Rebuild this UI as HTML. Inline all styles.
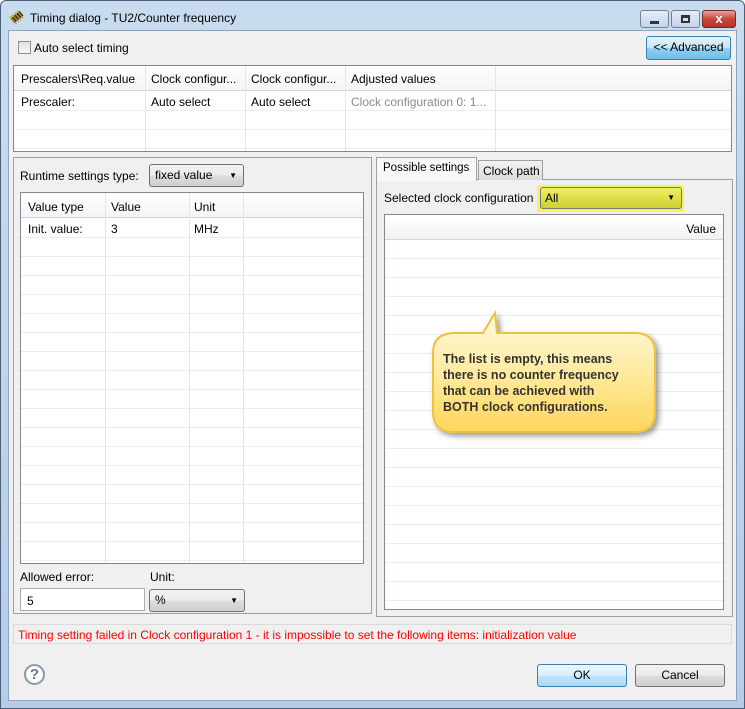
<!DOCTYPE html><html><head><style>
*{box-sizing:border-box}
body{margin:0;width:745px;height:709px;position:relative;overflow:hidden;font-family:"Liberation Sans",sans-serif;font-size:12px;color:#000;background:#fff}
.a{position:absolute}
.frame{left:0;top:0;width:745px;height:709px;background:linear-gradient(#c9dcef,#b7cde6);border:1px solid #4b5f78;border-radius:6px 6px 0 0}
.client{left:8px;top:30px;width:729px;height:671px;background:#f0f0f0;border:1px solid #8ea3bd}
.btn{border:1px solid #707070;border-radius:3px;background:linear-gradient(#f2f2f2 0,#ebebeb 50%,#dddddd 51%,#cfcfcf);text-align:center;line-height:21px}
.tbl{background:#fff;border:1px solid #828790}
.hl{height:1px;background:#ededed}
.vl{width:1px;background:#e5e5e5}
.t{white-space:nowrap}
</style></head><body>
<div class="a frame"></div>
<svg class="a" style="left:8px;top:8px" width="18" height="18" viewBox="0 0 18 18"><g transform="rotate(-40 9 9)"><rect x="3" y="6" width="12" height="6" fill="#333"/><g stroke="#c8a000" stroke-width="1.2"><line x1="4" y1="4" x2="4" y2="14"/><line x1="7" y1="4" x2="7" y2="14"/><line x1="10" y1="4" x2="10" y2="14"/><line x1="13" y1="4" x2="13" y2="14"/></g></g></svg>
<div class="a t" style="left:30px;top:11px;font-size:12px">Timing dialog - TU2/Counter frequency</div>
<div class="a" style="left:640px;top:10px;width:29px;height:18px;border:1px solid #6f829b;border-radius:3px;background:linear-gradient(#e6eef8,#c3d3e6)"><div class="a" style="left:9px;top:10px;width:9px;height:3px;background:#333"></div></div>
<div class="a" style="left:671px;top:10px;width:29px;height:18px;border:1px solid #6f829b;border-radius:3px;background:linear-gradient(#e6eef8,#c3d3e6)"><div class="a" style="left:9px;top:4px;width:9px;height:8px;border:2px solid #333;border-top-width:3px"></div></div>
<div class="a" style="left:702px;top:10px;width:34px;height:18px;border:1px solid #7a2a20;border-radius:3px;background:linear-gradient(#e8a595,#c8463a 50%,#b63326);color:#fff;font-weight:bold;text-align:center;line-height:16px;font-size:13px">x</div>
<div class="a client"></div>
<div class="a" style="left:18px;top:41px;width:13px;height:13px;border:1px solid #8f8f8f;background:linear-gradient(#e0e0e0,#f8f8f8)"></div>
<div class="a t" style="left:34px;top:41px">Auto select timing</div>
<div class="a btn" style="left:646px;top:36px;width:85px;height:24px;border-color:#3c7fb1;background:linear-gradient(#e5f4fc,#c4e5f6 50%,#98d1ef 51%,#6cbce8)">&lt;&lt; Advanced</div>
<div class="a tbl" style="left:13px;top:65px;width:719px;height:87px">
<div class="a" style="left:0;top:0;width:717px;height:24px;background:linear-gradient(#fff,#f3f4f6)"></div>
<div class="a" style="left:0;top:24px;width:717px;height:1px;background:#d5d5d5"></div>
<div class="a hl" style="left:0;top:44px;width:717px"></div>
<div class="a hl" style="left:0;top:63px;width:717px"></div>
<div class="a hl" style="left:0;top:82px;width:717px"></div>
<div class="a vl" style="left:131px;top:0;height:85px"></div><div class="a vl" style="left:231px;top:0;height:85px"></div><div class="a vl" style="left:331px;top:0;height:85px"></div><div class="a vl" style="left:481px;top:0;height:85px"></div>
<div class="a t" style="left:7px;top:6px">Prescalers\Req.value</div><div class="a t" style="left:137px;top:6px">Clock configur...</div><div class="a t" style="left:237px;top:6px">Clock configur...</div><div class="a t" style="left:337px;top:6px">Adjusted values</div>
<div class="a t" style="left:7px;top:29px">Prescaler:</div><div class="a t" style="left:137px;top:29px">Auto select</div><div class="a t" style="left:237px;top:29px">Auto select</div><div class="a t" style="left:337px;top:29px;color:#8a8a8a">Clock configuration 0: 1...</div>
</div>
<div class="a" style="left:13px;top:157px;width:359px;height:457px;border:1px solid #a0a0a0;background:#f0f0f0"></div>
<div class="a t" style="left:20px;top:169px">Runtime settings type:</div>
<div class="a btn" style="left:149px;top:164px;width:95px;height:23px;text-align:left;padding-left:5px">fixed value<span class="a" style="right:6px;top:0;font-size:8px">▼</span></div>
<div class="a tbl" style="left:20px;top:192px;width:344px;height:372px;overflow:hidden">
<div class="a" style="left:0;top:0;width:342px;height:24px;background:linear-gradient(#fff,#f3f4f6)"></div>
<div class="a" style="left:0;top:24px;width:342px;height:1px;background:#d5d5d5"></div>
<div id="lr"></div>
<div class="a vl" style="left:84px;top:0;height:370px"></div><div class="a vl" style="left:168px;top:0;height:370px"></div><div class="a vl" style="left:222px;top:0;height:370px"></div>
<div class="a t" style="left:7px;top:7px">Value type</div><div class="a t" style="left:90px;top:7px">Value</div><div class="a t" style="left:173px;top:7px">Unit</div>
<div class="a t" style="left:7px;top:29px">Init. value:</div><div class="a t" style="left:90px;top:29px">3</div><div class="a t" style="left:173px;top:29px">MHz</div>
</div>
<div class="a t" style="left:20px;top:570px">Allowed error:</div>
<div class="a t" style="left:150px;top:570px">Unit:</div>
<div class="a" style="left:20px;top:588px;width:125px;height:23px;border:1px solid #abadb3;background:#fff;padding:5px 6px">5</div>
<div class="a btn" style="left:149px;top:589px;width:96px;height:23px;text-align:left;padding-left:5px">%<span class="a" style="right:6px;top:0;font-size:8px">▼</span></div>
<div class="a" style="left:376px;top:179px;width:357px;height:438px;border:1px solid #a0a0a0;background:#f0f0f0"></div>
<div class="a t" style="left:376px;top:157px;width:101px;height:24px;border:1px solid #a0a0a0;border-bottom:none;background:#f7f7f7;padding:4px 0 0 6px;font-size:11.5px">Possible settings</div>
<div class="a t" style="left:478px;top:160px;width:65px;height:20px;border:1px solid #a0a0a0;border-bottom:none;background:linear-gradient(#f2f2f2,#dcdcdc);padding:3px 0 0 4px">Clock path</div>
<div class="a t" style="left:384px;top:191px">Selected clock configuration</div>
<div class="a" style="left:537px;top:185px;width:147px;height:27px;background:#f3f35a;border-radius:2px"></div>
<div class="a" style="left:540px;top:187px;width:142px;height:22px;border:1px solid #777;border-radius:3px;background:linear-gradient(#efef62,#cfcf35);padding:3px 4px">All<span class="a" style="right:6px;top:5px;font-size:8px">▼</span></div>
<div class="a tbl" style="left:384px;top:214px;width:340px;height:396px;overflow:hidden">
<div class="a" style="left:0;top:2px;width:338px;height:22px;background:linear-gradient(#fff,#f1f2f4)"></div>
<div class="a" style="left:0;top:24px;width:338px;height:1px;background:#d5d5d5"></div>
<div id="rr"></div>
<div class="a t" style="right:7px;top:7px">Value</div>
</div>
<svg class="a" style="left:425px;top:305px" width="245" height="140"><defs><linearGradient id="g" x1="0" y1="0" x2="0" y2="1"><stop offset="0" stop-color="#fffbe0"/><stop offset="0.5" stop-color="#ffeaa0"/><stop offset="1" stop-color="#ffd65a"/></linearGradient><filter id="s"><feDropShadow dx="3" dy="3" stdDeviation="3" flood-opacity="0.4"/></filter></defs>
<path d="M30 28 L58 28 L70 8 L72 28 L210 28 Q230 28 230 48 L230 107 Q230 127 210 127 L28 127 Q8 127 8 107 L8 48 Q8 28 30 28 Z" fill="url(#g)" stroke="#f0c040" stroke-width="2" filter="url(#s)"/></svg>
<div class="a" style="left:443px;top:351px;font-weight:bold;font-size:12.5px;line-height:16px;color:#333">The list is empty, this means<br>there is no counter frequency<br>that can be achieved with<br>BOTH clock configurations.</div>
<div class="a" style="left:13px;top:624px;width:719px;height:20px;border:1px solid #dadada;background:#f0f0f0;color:#f00;padding:3px 4px;white-space:nowrap">Timing setting failed in Clock configuration 1 - it is impossible to set the following items: initialization value</div>
<div class="a" style="left:24px;top:664px;width:21px;height:21px;border:2px solid #8a9aa8;border-radius:50%;background:#fafafa;text-align:center;font-weight:bold;color:#6a7a88;font-size:15px;line-height:17px">?</div>
<div class="a btn" style="left:537px;top:664px;width:90px;height:23px;border-color:#3c7fb1;background:linear-gradient(#eaf6fd,#d9f0fc 50%,#bee6fd 51%,#a7d9f5)">OK</div>
<div class="a btn" style="left:635px;top:664px;width:90px;height:23px">Cancel</div>
<script>
var l='';for(var y=44;y<372;y+=19)l+='<div class="a hl" style="left:0;top:'+y+'px;width:342px"></div>';document.getElementById('lr').outerHTML=l;
var r='';for(var y=43;y<396;y+=19)r+='<div class="a hl" style="left:0;top:'+y+'px;width:338px"></div>';document.getElementById('rr').outerHTML=r;
</script>
</body></html>
